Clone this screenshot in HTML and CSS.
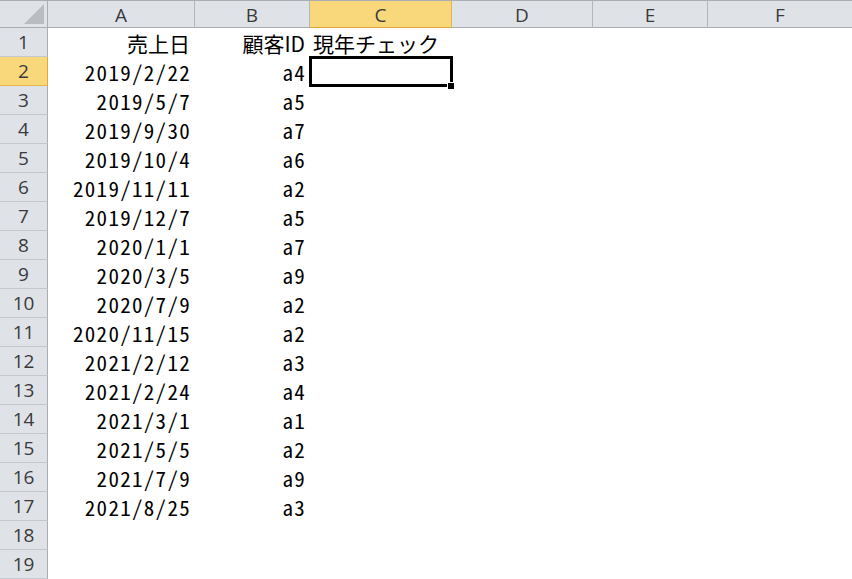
FILE: index.html
```html
<!DOCTYPE html>
<html lang="ja">
<head>
<meta charset="utf-8">
<title>Sheet</title>
<link rel="stylesheet" href="styles.css">
</head>
<body>
<div class="sheet">
  <div class="corner"><span class="tri"></span></div>
  <div class="ch">A</div>
  <div class="ch">B</div>
  <div class="ch sel">C</div>
  <div class="ch">D</div>
  <div class="ch">E</div>
  <div class="ch last">F</div>

  <div class="rh">1</div><div class="c r">売上日</div><div class="c r">顧客ID</div><div class="c l over">現年チェック</div><div class="c"></div><div class="c"></div><div class="c"></div>
  <div class="rh sel">2</div><div class="c r d">2019/2/22</div><div class="c r d">a4</div><div class="c active"><span class="handle"></span></div><div class="c"></div><div class="c"></div><div class="c"></div>
  <div class="rh">3</div><div class="c r d">2019/5/7</div><div class="c r d">a5</div><div class="c"></div><div class="c"></div><div class="c"></div><div class="c"></div>
  <div class="rh">4</div><div class="c r d">2019/9/30</div><div class="c r d">a7</div><div class="c"></div><div class="c"></div><div class="c"></div><div class="c"></div>
  <div class="rh">5</div><div class="c r d">2019/10/4</div><div class="c r d">a6</div><div class="c"></div><div class="c"></div><div class="c"></div><div class="c"></div>
  <div class="rh">6</div><div class="c r d">2019/11/11</div><div class="c r d">a2</div><div class="c"></div><div class="c"></div><div class="c"></div><div class="c"></div>
  <div class="rh">7</div><div class="c r d">2019/12/7</div><div class="c r d">a5</div><div class="c"></div><div class="c"></div><div class="c"></div><div class="c"></div>
  <div class="rh">8</div><div class="c r d">2020/1/1</div><div class="c r d">a7</div><div class="c"></div><div class="c"></div><div class="c"></div><div class="c"></div>
  <div class="rh">9</div><div class="c r d">2020/3/5</div><div class="c r d">a9</div><div class="c"></div><div class="c"></div><div class="c"></div><div class="c"></div>
  <div class="rh">10</div><div class="c r d">2020/7/9</div><div class="c r d">a2</div><div class="c"></div><div class="c"></div><div class="c"></div><div class="c"></div>
  <div class="rh">11</div><div class="c r d">2020/11/15</div><div class="c r d">a2</div><div class="c"></div><div class="c"></div><div class="c"></div><div class="c"></div>
  <div class="rh">12</div><div class="c r d">2021/2/12</div><div class="c r d">a3</div><div class="c"></div><div class="c"></div><div class="c"></div><div class="c"></div>
  <div class="rh">13</div><div class="c r d">2021/2/24</div><div class="c r d">a4</div><div class="c"></div><div class="c"></div><div class="c"></div><div class="c"></div>
  <div class="rh">14</div><div class="c r d">2021/3/1</div><div class="c r d">a1</div><div class="c"></div><div class="c"></div><div class="c"></div><div class="c"></div>
  <div class="rh">15</div><div class="c r d">2021/5/5</div><div class="c r d">a2</div><div class="c"></div><div class="c"></div><div class="c"></div><div class="c"></div>
  <div class="rh">16</div><div class="c r d">2021/7/9</div><div class="c r d">a9</div><div class="c"></div><div class="c"></div><div class="c"></div><div class="c"></div>
  <div class="rh">17</div><div class="c r d">2021/8/25</div><div class="c r d">a3</div><div class="c"></div><div class="c"></div><div class="c"></div><div class="c"></div>
  <div class="rh">18</div><div class="c"></div><div class="c"></div><div class="c"></div><div class="c"></div><div class="c"></div><div class="c"></div>
  <div class="rh">19</div><div class="c"></div><div class="c"></div><div class="c"></div><div class="c"></div><div class="c"></div><div class="c"></div>
</div>
</body>
</html>
```

FILE: styles.css
```css
html, body {
  margin: 0;
  padding: 0;
  background: #ffffff;
  overflow: hidden;
}

.sheet {
  display: grid;
  grid-template-columns: 48px 147px 115px 142px 141px 115px 1fr;
  grid-template-rows: 28px repeat(19, 29px);
  width: 852px;
  height: 579px;
  overflow: hidden;
}

.corner {
  position: relative;
  background: #dfe3e8;
  border-top: 1px solid #a9aeb4;
  border-right: 1px solid #a9aeb4;
  border-bottom: 1px solid #a9aeb4;
  box-sizing: border-box;
}

.tri {
  position: absolute;
  right: 3px;
  bottom: 3px;
  width: 0;
  height: 0;
  border-left: 20px solid transparent;
  border-bottom: 20px solid #b9bdc2;
}

.ch {
  box-sizing: border-box;
  background: #dfe3e8;
  border-top: 1px solid #a9aeb4;
  border-right: 1px solid #b2b7bd;
  border-bottom: 1px solid #a9aeb4;
  display: flex;
  align-items: center;
  justify-content: center;
  font-family: "Open Sans", "Liberation Sans", sans-serif;
  font-size: 19px;
  color: #3a3a3a;
  padding-top: 1px;
}

.ch.last {
  border-right: none;
}

.ch.sel {
  background: #f8d87a;
  border-right: 1px solid #e8b44a;
  border-bottom: 1px solid #e0a83a;
}

.rh {
  box-sizing: border-box;
  background: #dfe3e8;
  border-right: 1px solid #a9aeb4;
  border-bottom: 1px solid #c3c8ce;
  display: flex;
  align-items: center;
  justify-content: center;
  font-family: "Open Sans", "Liberation Sans", sans-serif;
  font-size: 19px;
  color: #3a3a3a;
}

.rh.sel {
  background: #f8d87a;
  border-right: 1px solid #e0a83a;
  border-bottom: 1px solid #e8b44a;
}

.c {
  box-sizing: border-box;
  position: relative;
  display: flex;
  align-items: flex-end;
  font-family: "Noto Sans CJK JP", sans-serif;
  font-size: 21px;
  line-height: 1;
  color: #000000;
  padding: 0 5px 3px 3px;
  white-space: nowrap;
}

.c.d {
  font-feature-settings: "hwid" 1;
  letter-spacing: 1.3px;
  padding-right: 4px;
}

.c.r {
  justify-content: flex-end;
}

.c.l {
  justify-content: flex-start;
}

.c.over {
  overflow: visible;
  z-index: 2;
}

.c.active {
  z-index: 3;
}

.c.active::before {
  content: "";
  position: absolute;
  left: -1px;
  top: -1px;
  right: -1px;
  bottom: -1px;
  border: 3px solid #000000;
}

.handle {
  position: absolute;
  right: -3px;
  bottom: -4px;
  width: 6px;
  height: 6px;
  background: #000000;
  border: 1px solid #ffffff;
}
```
